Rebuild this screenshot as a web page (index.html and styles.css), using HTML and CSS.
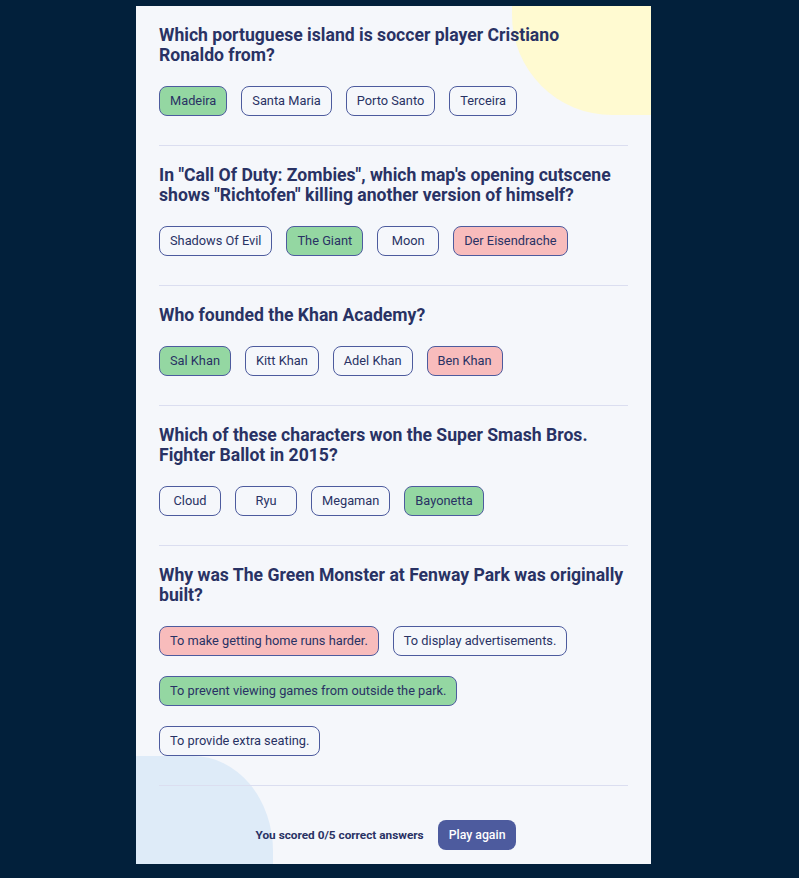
FILE: index.html
```html
<!DOCTYPE html>
<html lang="en">
<head>
<meta charset="utf-8">
<title>Quizzical</title>
<link rel="stylesheet" href="styles.css">
</head>
<body>
<main class="card">
  <div class="blob blob-yellow"></div>
  <div class="blob blob-blue"></div>

  <section class="question">
    <h2 class="q-title">Which portuguese island is soccer player Cristiano Ronaldo from?</h2>
    <div class="answers">
      <span class="answer correct">Madeira</span>
      <span class="answer">Santa Maria</span>
      <span class="answer">Porto Santo</span>
      <span class="answer">Terceira</span>
    </div>
  </section>

  <section class="question">
    <h2 class="q-title">In "Call Of Duty: Zombies", which map's opening cutscene shows "Richtofen" killing another version of himself?</h2>
    <div class="answers">
      <span class="answer">Shadows Of Evil</span>
      <span class="answer correct">The Giant</span>
      <span class="answer">Moon</span>
      <span class="answer wrong">Der Eisendrache</span>
    </div>
  </section>

  <section class="question">
    <h2 class="q-title">Who founded the Khan Academy?</h2>
    <div class="answers">
      <span class="answer correct">Sal Khan</span>
      <span class="answer">Kitt Khan</span>
      <span class="answer">Adel Khan</span>
      <span class="answer wrong">Ben Khan</span>
    </div>
  </section>

  <section class="question">
    <h2 class="q-title">Which of these characters won the Super Smash Bros. Fighter Ballot in 2015?</h2>
    <div class="answers">
      <span class="answer">Cloud</span>
      <span class="answer">Ryu</span>
      <span class="answer">Megaman</span>
      <span class="answer correct">Bayonetta</span>
    </div>
  </section>

  <section class="question">
    <h2 class="q-title">Why was The Green Monster at Fenway Park was originally built?</h2>
    <div class="answers">
      <span class="answer wrong">To make getting home runs harder.</span>
      <span class="answer">To display advertisements.</span>
      <span class="answer correct">To prevent viewing games from outside the park.</span>
      <span class="answer">To provide extra seating.</span>
    </div>
  </section>

  <footer class="footer">
    <p class="score">You scored 0/5 correct answers</p>
    <button class="play-btn" type="button">Play again</button>
  </footer>
</main>
</body>
</html>
```

FILE: styles.css
```css
* {
  box-sizing: border-box;
}

html, body {
  margin: 0;
  padding: 0;
}

body {
  background: #02203b;
  font-family: Roboto, "Liberation Sans", sans-serif;
  color: #293264;
  display: flex;
  justify-content: center;
  align-items: flex-start;
  padding: 6px 12px 0 0;
}

.card {
  position: relative;
  overflow: hidden;
  width: 515px;
  background: #f5f7fb;
  padding: 19px 23px 14px;
}

.blob {
  position: absolute;
  z-index: 0;
}

.blob-yellow {
  top: 0;
  right: 0;
  width: 139px;
  height: 109px;
  background: #fffad1;
  border-bottom-left-radius: 100px 100px;
}

.blob-blue {
  left: 0;
  bottom: 0;
  width: 137px;
  height: 108px;
  background: #deebf8;
  border-top-right-radius: 80px 95px;
}

.question {
  position: relative;
  z-index: 1;
  padding: 19px 0 29px;
  border-bottom: 1px solid #dbdef0;
}

.question:first-of-type {
  padding-top: 0;
}

.q-title {
  margin: 0;
  font-size: 17.6px;
  line-height: 20px;
  font-weight: 700;
  color: #293264;
}

.answers {
  display: flex;
  flex-wrap: wrap;
  gap: 20px 14px;
  margin-top: 21px;
}

.answer {
  display: inline-block;
  min-width: 62px;
  height: 30px;
  padding: 7px 10px;
  border: 1px solid #4d5b9e;
  border-radius: 8px;
  font-size: 12.8px;
  line-height: 14px;
  text-align: center;
  color: #293264;
  background: transparent;
  white-space: nowrap;
}

.answer.correct {
  background: #94d7a2;
}

.answer.wrong {
  background: #f8bcbc;
}

.footer {
  position: relative;
  z-index: 1;
  display: flex;
  align-items: center;
  justify-content: center;
  gap: 14px;
  padding: 34px 15px 0 0;
}

.score {
  margin: 0;
  font-size: 11.8px;
  font-weight: 700;
  color: #293264;
}

.play-btn {
  height: 30px;
  padding: 0 11px;
  border: none;
  border-radius: 8px;
  background: #4d5b9e;
  color: #ffffff;
  font-family: Roboto, "Liberation Sans", sans-serif;
  font-size: 12.3px;
  font-weight: 500;
}
```
